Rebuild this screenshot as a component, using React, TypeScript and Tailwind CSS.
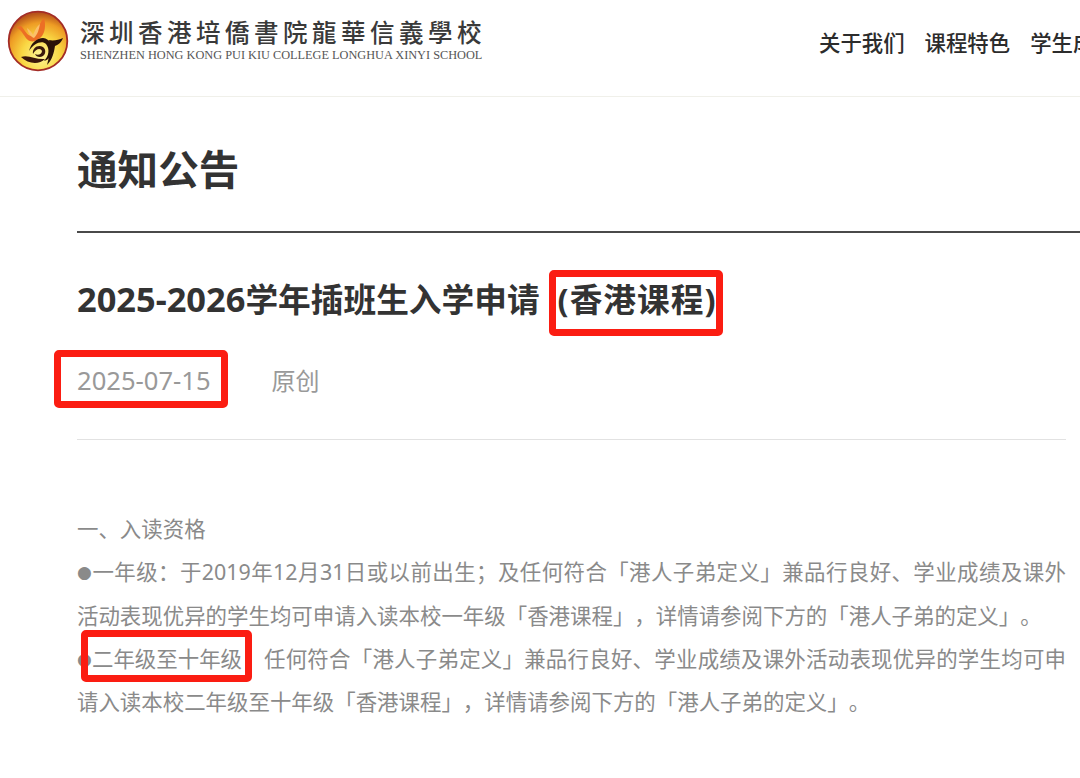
import { FC, ReactNode } from "react";

const Logo: FC = () => (
  <svg width="62" height="62" viewBox="0 0 62 62" className="shrink-0 blur-[0.4px]">
    <defs>
      <radialGradient id="disc" cx="55%" cy="75%" r="72%">
        <stop offset="0%" stopColor="#fff59a" />
        <stop offset="45%" stopColor="#f9d743" />
        <stop offset="78%" stopColor="#ee9c24" />
        <stop offset="100%" stopColor="#b8541a" />
      </radialGradient>
    </defs>
    <circle cx="31" cy="31" r="29.3" fill="url(#disc)" stroke="#a32c26" strokeWidth="1.8" />
    {/* phoenix */}
    <path d="M9 17 L14 16 C18 20 20 26 25 26 C31 25 30 15 37 8 C39 15 38 22 35 26 C31 31 25 33 21 30 C17 27 16 21 9 17 Z" fill="#ec6f25" />
    <path d="M20 18 C23 20 25 23 26 25 C28 21 29 17 33 14 C32 19 31 24 27 28 C24 27 21 23 20 18 Z" fill="#fbc06a" />
    {/* swirl */}
    <path d="M22 41 C24 33 30 28 36 28 C43 29 47 35 45 42 C44 47 41 50 37 51 C42 46 43 39 39 34 C35 30 27 33 22 41 Z" fill="#2b1309" />
    <path d="M26 44 C25 38 31 34 36 37 C39 39 39 44 36 46 C33 48 29 47 28 44 C31 46 35 44 35 41 C34 38 29 38 26 44 Z" fill="#3b1a0c" />
    <path d="M42 30 C46 31 52 30 56 28 C54 33 51 35 48 36 C47 43 45 50 40 55 C42 47 45 37 42 30 Z" fill="#2b1309" />
    <path d="M14 47 C21 44 29 50 38 49 C32 55 21 54 14 47 Z" fill="#3a150a" />
  </svg>
);

const Marked: FC<{ children: ReactNode; box: string }> = ({ children, box }) => (
  <span className="relative inline-block">
    {children}
    <span className={`absolute border-[7px] border-[#fb1d12] rounded-[5px] ${box}`} />
  </span>
);

const Bullet: FC = () => (
  <span className="inline-block w-[15px] text-[17px] leading-none align-[2px] font-['DejaVu_Sans',sans-serif]">●</span>
);

export default function App() {
  return (
    <div className="w-[1080px] h-[778px] overflow-hidden bg-white text-[#333] font-['Noto_Sans','Noto_Sans_CJK_SC',sans-serif] [text-spacing-trim:space-all]">
      <header className="h-[97px] border-b border-[#f0f0ea] flex pl-[7px] pt-[10px] whitespace-nowrap">
        <Logo />
        <div className="ml-[11px] w-[410px] shrink-0 text-[#3a3a3a]">
          <div className="mt-[8px] h-[28px] text-[24.5px] leading-[28px] tracking-[4.5px] font-medium font-['Noto_Sans_CJK_TC',serif]">
            深圳香港培僑書院龍華信義學校
          </div>
          <div className="mt-[1px] text-[12.3px] leading-[16px] font-['Liberation_Serif',serif] text-[#555]">
            SHENZHEN HONG KONG PUI KIU COLLEGE LONGHUA XINYI SCHOOL
          </div>
        </div>
        <nav className="ml-[329px] shrink-0 flex gap-[20px] text-[21.4px] leading-[30px] font-medium pt-[18px] text-[#2c2c2c]">
          <span>关于我们</span>
          <span>课程特色</span>
          <span>学生成长</span>
        </nav>
      </header>

      <main className="pl-[77px]">
        <h1 className="mt-[45px] text-[40.6px] leading-[56px] font-bold text-[#333]">通知公告</h1>
        <div className="mt-[33px] h-[2px] bg-[#4a4a4a]" />
        <h2 className="mt-[42px] text-[32.7px] leading-[48px] font-bold text-[#333] whitespace-nowrap">
          <span className="text-[34.4px]">2025-2026</span>学年插班生入学申请
          <span className="ml-[18px] inline-block tracking-[1px]">
            <Marked box="-left-[9px] -right-[6px] -top-[6px] -bottom-[12px]">(香港课程)</Marked>
          </span>
        </h2>
        <div className="mt-[39px] flex items-center text-[24px] leading-[36px] text-[#999] mr-[14px]">
          <Marked box="-left-[23px] -right-[17px] -top-[13px] -bottom-[9px]">
            <span className="text-[25.6px]">2025-07-15</span>
          </Marked>
          <span className="ml-[61px]">原创</span>
        </div>
        <div className="mt-[40px] mr-[14px] h-px bg-[#e2e2e2]" />
        <article className="mt-[67px] mr-[14px] text-[21.45px] leading-[43.3px] text-[#8a8a8a] text-justify">
          <p>一、入读资格</p>
          <p>
            <Bullet />一年级：于2019年12月31日或以前出生；及任何符合「港人子弟定义」兼品行良好、学业成绩及课外活动表现优异的学生均可申请入读本校一年级「香港课程」，详情请参阅下方的「港人子弟的定义」。
          </p>
          <p>
            <Bullet />
            <Marked box="-left-[11px] -right-[10px] -top-[7px] -bottom-[2px]">二年级至十年级</Marked>
            ：任何符合「港人子弟定义」兼品行良好、学业成绩及课外活动表现优异的学生均可申请入读本校二年级至十年级「香港课程」，详情请参阅下方的「港人子弟的定义」。
          </p>
        </article>
      </main>
    </div>
  );
}
